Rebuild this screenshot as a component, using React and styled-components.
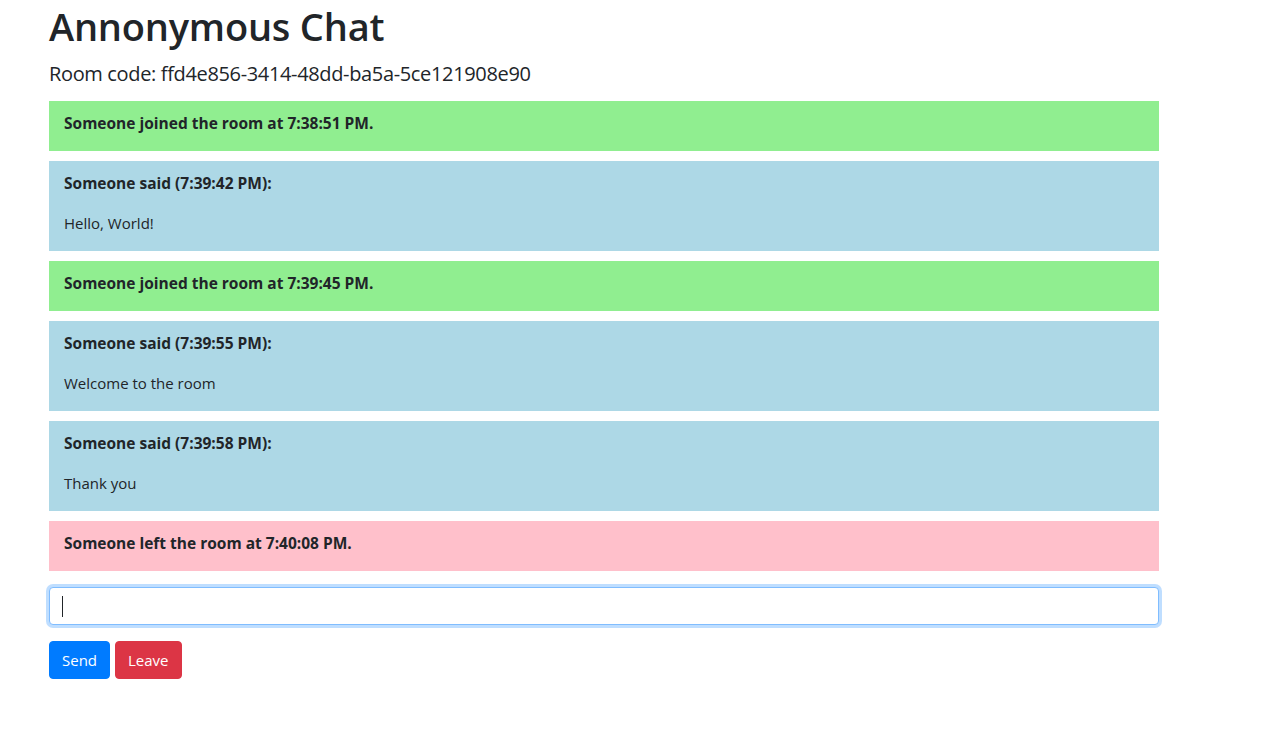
import React from "react";
import styled, { createGlobalStyle } from "styled-components";

const Global = createGlobalStyle`
  * { box-sizing: border-box; }
  body {
    margin: 0;
    font-family: "Open Sans", "Noto Sans", sans-serif;
    font-size: 16px;
    line-height: 1.5;
    color: #212529;
    background: #fff;
  }
`;

const Container = styled.div`
  width: 1140px;
  padding: 0 15px;
  margin-left: 34px;
`;

const Title = styled.h1`
  margin: 2px 0 12px;
  font-size: 38px;
  font-weight: 600;
  line-height: 48px;
  letter-spacing: -0.2px;
`;

const RoomCode = styled.h5`
  margin: 0 0 15px;
  font-size: 20px;
  font-weight: 500;
  line-height: 24px;
  letter-spacing: -0.35px;
`;

const colors = { join: "#90ee90", said: "#add8e6", left: "#ffc0cb" };

const Message = styled.div`
  background: ${(p) => colors[p.$kind]};
  padding: 10px 15px 16px;
  margin-bottom: 10px;
  display: flex;
  flex-direction: column;
  gap: 16px;
`;

const Line = styled.p`
  margin: 0;
  font-size: ${(p) => (p.$bold ? "15.5px" : "15px")};
  line-height: 24px;
  font-weight: ${(p) => (p.$bold ? 700 : 400)};
`;

const InputWrap = styled.div`
  position: relative;
  margin-top: 16px;
  margin-bottom: 16px;
`;

const Input = styled.input`
  display: block;
  width: 100%;
  height: 38px;
  padding: 6px 12px;
  font: inherit;
  color: #495057;
  border: 1px solid #80bdff;
  border-radius: 4px;
  outline: none;
  box-shadow: 0 0 0 3px rgba(0, 123, 255, 0.25);
  caret-color: transparent;
`;

const Caret = styled.span`
  position: absolute;
  left: 13px;
  top: 9px;
  width: 1px;
  height: 21px;
  background: #212529;
`;

const Buttons = styled.div`
  display: flex;
  gap: 5px;
`;

const Button = styled.button`
  height: 38px;
  padding: 6px 12px;
  border: 1px solid ${(p) => p.$bg};
  border-radius: 4px;
  background: ${(p) => p.$bg};
  color: #fff;
  font: inherit;
  font-size: 15px;
  cursor: pointer;
`;

const messages = [
  { kind: "join", head: "Someone joined the room at 7:38:51 PM." },
  { kind: "said", head: "Someone said (7:39:42 PM):", body: "Hello, World!" },
  { kind: "join", head: "Someone joined the room at 7:39:45 PM." },
  { kind: "said", head: "Someone said (7:39:55 PM):", body: "Welcome to the room" },
  { kind: "said", head: "Someone said (7:39:58 PM):", body: "Thank you" },
  { kind: "left", head: "Someone left the room at 7:40:08 PM." },
];

export default function App() {
  return (
    <>
      <Global />
      <Container>
        <Title>Annonymous Chat</Title>
        <RoomCode>Room code: ffd4e856-3414-48dd-ba5a-5ce121908e90</RoomCode>
        {messages.map((m, i) => (
          <Message key={i} $kind={m.kind}>
            <Line $bold>{m.head}</Line>
            {m.body && <Line>{m.body}</Line>}
          </Message>
        ))}
        <InputWrap>
          <Input type="text" />
          <Caret />
        </InputWrap>
        <Buttons>
          <Button $bg="#007bff">Send</Button>
          <Button $bg="#dc3545">Leave</Button>
        </Buttons>
      </Container>
    </>
  );
}
